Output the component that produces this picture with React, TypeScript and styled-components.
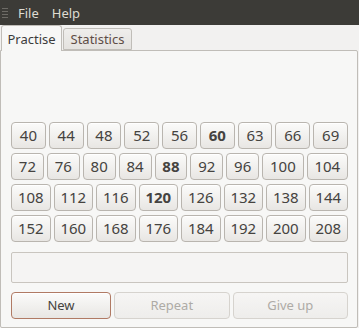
import React from 'react';
import styled, { createGlobalStyle, css } from 'styled-components';

const GlobalStyle = createGlobalStyle`
  html, body {
    margin: 0;
    padding: 0;
    background: #f2f1f0;
    font-family: "Noto Sans", "Open Sans", "DejaVu Sans", sans-serif;
  }
`;

const StyledWindow = styled.div`
  width: 359px;
  height: 328px;
  display: flex;
  flex-direction: column;
  background: #f2f1f0;
  overflow: hidden;
`;

const StyledMenuBar = styled.div`
  height: 25px;
  flex: none;
  display: flex;
  align-items: center;
  background: #3c3b37;
  padding-left: 2px;
`;

const StyledGrip = styled.svg`
  flex: none;
  margin-right: 4px;
`;

const StyledMenuItem = styled.span`
  color: #dfdbd2;
  font-size: 13px;
  padding: 0 7px 0 6px;
`;

const StyledNotebook = styled.div`
  flex: 1;
  display: flex;
  flex-direction: column;
  margin: 0 1px 1px 0;
`;

const StyledTabRow = styled.div`
  height: 25px;
  flex: none;
  display: flex;
  align-items: flex-end;
  gap: 1px;
  padding-left: 1px;
  position: relative;
  z-index: 1;
`;

const StyledTab = styled.div<{ $active?: boolean }>`
  display: flex;
  align-items: center;
  justify-content: center;
  font-size: 13px;
  border: 1px solid #c0bdb8;
  border-radius: 3px 3px 0 0;
  box-sizing: border-box;
  ${({ $active }) =>
    $active
      ? css`
          height: 26px;
          width: 61px;
          margin-bottom: -1px;
          border-bottom: none;
          background: #f7f7f6;
          color: #3c3c3c;
        `
      : css`
          height: 22px;
          width: 69px;
          background: linear-gradient(#efeeec, #e4e2df);
          color: #5e4d46;
        `}
`;

const StyledPanel = styled.div`
  flex: 1;
  display: flex;
  flex-direction: column;
  border: 1px solid #c0bdb8;
  border-radius: 0 2px 2px 2px;
  background: #f7f7f6;
  padding: 71px 9px 8px 10px;
`;

const StyledGrid = styled.div`
  display: flex;
  flex-direction: column;
  gap: 4px;
`;

const StyledRow = styled.div`
  display: flex;
  gap: 3px;
`;

const StyledButton = styled.button<{ $bold?: boolean; $focus?: boolean }>`
  flex: 1 1 auto;
  height: 27px;
  padding: 0 5px;
  border: 1px solid ${({ $focus }) => ($focus ? '#b07a64' : '#b9b5af')};
  border-radius: 4px;
  background: linear-gradient(#fbfbfa, #e8e6e3);
  box-shadow: inset 0 1px 0 #ffffff;
  font-family: "Noto Sans", "Open Sans", "DejaVu Sans", sans-serif;
  font-size: 15px;
  font-weight: ${({ $bold }) => ($bold ? 700 : 400)};
  color: #454340;
  line-height: 1;

  &:disabled {
    color: #aeaba6;
    border-color: #d6d3ce;
    background: linear-gradient(#f6f5f4, #eeedeb);
    box-shadow: none;
  }
`;

const StyledActionButton = styled(StyledButton)<{ $grow?: number }>`
  font-size: 13px;
  flex: ${({ $grow }) => $grow ?? 1} 1 0;
`;

const StyledEntry = styled.div`
  height: 31px;
  margin-top: 10px;
  box-sizing: border-box;
  border: 1px solid #c9c5bf;
  border-radius: 2px;
  background: #f5f4f3;
`;

const StyledActions = styled.div`
  display: flex;
  gap: 3px;
  margin-top: 9px;
`;

const rows: number[][] = [
  [40, 44, 48, 52, 56, 60, 63, 66, 69],
  [72, 76, 80, 84, 88, 92, 96, 100, 104],
  [108, 112, 116, 120, 126, 132, 138, 144],
  [152, 160, 168, 176, 184, 192, 200, 208],
];

const boldValues = [60, 88, 120];

const Grip = () => (
  <StyledGrip width="6" height="14" viewBox="0 0 6 14">
    {[2, 5, 8, 11].map((y) => (
      <rect key={y} x="0" y={y} width="6" height="1" fill="#6d6b66" />
    ))}
  </StyledGrip>
);

const App = () => {
  return (
    <StyledWindow>
      <GlobalStyle />
      <StyledMenuBar>
        <Grip />
        <StyledMenuItem>File</StyledMenuItem>
        <StyledMenuItem>Help</StyledMenuItem>
      </StyledMenuBar>
      <StyledNotebook>
        <StyledTabRow>
          <StyledTab $active>Practise</StyledTab>
          <StyledTab>Statistics</StyledTab>
        </StyledTabRow>
        <StyledPanel>
          <StyledGrid>
            {rows.map((row, i) => (
              <StyledRow key={i}>
                {row.map((n) => (
                  <StyledButton key={n} $bold={boldValues.includes(n)}>
                    {n}
                  </StyledButton>
                ))}
              </StyledRow>
            ))}
          </StyledGrid>
          <StyledEntry />
          <StyledActions>
            <StyledActionButton $focus $grow={0.85}>
              New
            </StyledActionButton>
            <StyledActionButton disabled>Repeat</StyledActionButton>
            <StyledActionButton disabled>Give up</StyledActionButton>
          </StyledActions>
        </StyledPanel>
      </StyledNotebook>
    </StyledWindow>
  );
};

export default App;
